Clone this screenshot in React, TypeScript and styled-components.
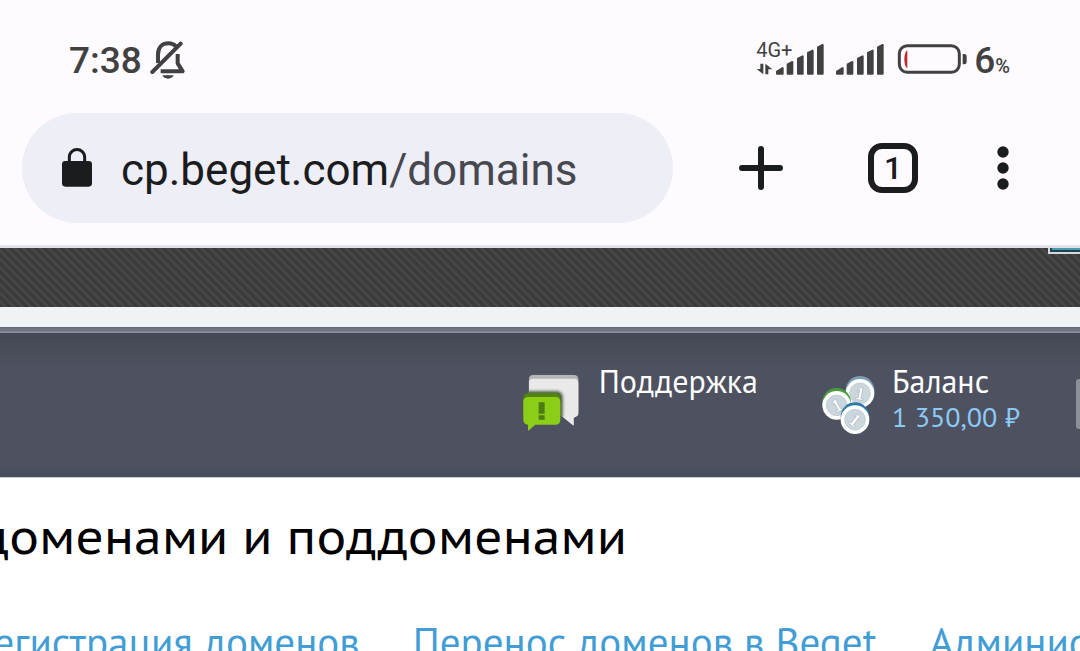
import React from "react";
import styled, { createGlobalStyle } from "styled-components";

const GlobalStyle = createGlobalStyle`
  *, *::before, *::after { box-sizing: border-box; }
  body { margin: 0; background: #fdfbff; }
`;

const siteFont = `"PT Sans", "Noto Sans", sans-serif`;
const captionFont = `"PT Sans Caption", "Noto Sans", sans-serif`;

const Screen = styled.div`
  display: flex;
  flex-direction: column;
  height: 100vh;
  overflow: hidden;
`;

const StatusBar = styled.div`
  display: flex;
  flex: none;
  align-items: center;
  justify-content: space-between;
  height: 113px;
  padding: 8px 70px 2px 69px;
  color: #414141;
  font-family: Roboto, sans-serif;
`;

const StatusGroup = styled.div<{ $gap: number }>`
  display: flex;
  align-items: center;
  gap: ${(p) => p.$gap}px;
`;

const Clock = styled.time`
  padding-top: 2px;
  font-size: 37px;
  font-weight: 500;
  line-height: 44px;
`;

const NetworkType = styled.div`
  display: flex;
  flex-direction: column;
  gap: 5px;
  width: 20px;
  padding-bottom: 3px;
  font-size: 20px;
  line-height: 16px;
  white-space: nowrap;
`;

const Charge = styled.div`
  display: flex;
  align-items: baseline;
  padding-top: 2px;
  font-size: 37px;
  font-weight: 500;
  line-height: 44px;
`;

const Percent = styled.span`
  font-size: 20px;
  line-height: 24px;
`;

const BrowserBar = styled.div`
  display: flex;
  flex: none;
  align-items: center;
  height: 135px;
  padding: 0 33px 22px 22px;
  border-bottom: 3px solid #e3e2e9;
`;

const AddressPill = styled.div`
  display: flex;
  flex: 1;
  align-items: center;
  gap: 29px;
  min-width: 0;
  height: 110px;
  margin-right: 22px;
  padding: 0 40px;
  border-radius: 55px;
  background: #edeef6;
`;

const Address = styled.a`
  padding-top: 4px;
  color: #1b1c20;
  font: 400 44px/56px Roboto, sans-serif;
  text-decoration: none;
  white-space: nowrap;
`;

const AddressPath = styled.span`
  color: #46474f;
`;

const BarButton = styled.button<{ $width: number }>`
  display: flex;
  flex: none;
  align-items: center;
  justify-content: center;
  width: ${(p) => p.$width}px;
  height: 110px;
  padding: 0;
  border: 0;
  background: none;
  color: #1b1c20;
`;

const TabCount = styled.span`
  display: grid;
  place-items: center;
  width: 50px;
  height: 50px;
  border: 6px solid currentColor;
  border-radius: 14px;
  font: 500 32px/38px Roboto, sans-serif;
`;

const Stripes = styled.div`
  display: flex;
  flex: none;
  align-items: flex-start;
  justify-content: flex-end;
  height: 59px;
  background: repeating-linear-gradient(45deg, #3b3b3b 0 2px, #4b4b4b 4px, #3b3b3b 6px);
`;

const BannerEdge = styled.div`
  width: 32px;
  height: 6px;
  border: solid #d5d9d9;
  border-width: 0 0 2px 2px;
  background: #469bb0;
  box-shadow: inset 2px -2px #1d4650;
`;

const LightStrip = styled.div`
  flex: none;
  height: 20px;
  background: #eff3f6;
`;

const Bevel = styled.div`
  flex: none;
  height: 6px;
  background: linear-gradient(#666976 0 1px, #777a88 2px, #696c7a 3px, #777a8b 4px, #8c8fa0 5px 6px);
`;

const SiteHeader = styled.header`
  display: flex;
  flex: none;
  align-items: flex-start;
  justify-content: flex-end;
  height: 145px;
  padding-top: 30px;
  border-bottom: 1px solid #c9cbd4;
  background: linear-gradient(#454854, #4e515f 35px, #4e515f 130px, #494c59);
  font-family: ${siteFont};
`;

const HeaderItem = styled.a<{ $gap: number; $end: number; $drop: number }>`
  display: flex;
  align-items: flex-start;
  gap: ${(p) => p.$gap}px;
  margin-right: ${(p) => p.$end}px;
  color: #fff;
  text-decoration: none;
  white-space: nowrap;
  svg { margin-top: ${(p) => p.$drop}px; }
`;

const ItemText = styled.span`
  display: flex;
  flex-direction: column;
  font-size: 32px;
  line-height: 36px;
`;

const Amount = styled.span`
  color: #8ccaf6;
  font-size: 28px;
`;

const NextItem = styled.span`
  width: 4px;
  height: 50px;
  margin-top: 16px;
  border-radius: 3px 0 0 3px;
  background: #8c8e98;
`;

const Content = styled.main`
  flex: 1;
  min-height: 0;
  overflow: hidden;
  background: #fff;
`;

const Title = styled.h1`
  margin: 22px 0 0 -21px;
  color: #000;
  font-family: ${captionFont};
  font-size: 48px;
  font-weight: 400;
  line-height: 72px;
  white-space: nowrap;
`;

const Links = styled.nav`
  display: flex;
  gap: 53px;
  margin: 44px 0 0 -28px;
  white-space: nowrap;
`;

const SiteLink = styled.a`
  color: #429dd4;
  font-family: ${siteFont};
  font-size: 41px;
  line-height: 52px;
  text-decoration: none;
`;

const MutedBell = () => (
  <svg width="36" height="38" viewBox="298 61 108 114" fill="none" stroke="currentColor" strokeWidth="12" strokeLinecap="round">
    <path d="M305 154 390 69" />
    <path d="M322 127V102C322 78 337 68 353 68C363 68 370 71 376 77" strokeLinecap="butt" />
    <path d="M381 100V128L396 152H330" strokeLinecap="butt" strokeLinejoin="round" />
    <path d="M335 164H369Q364 174 352 174Q340 174 335 164Z" fill="currentColor" stroke="none" />
  </svg>
);

const DataArrows = () => (
  <svg width="17" height="12" viewBox="0 0 51 36" fill="currentColor">
    <path d="M13 2H22V34L2 18H13ZM28 2 49 19H37V34H28Z" />
  </svg>
);

const Signal = () => (
  <svg width="48" height="31" viewBox="0 0 144 93" fill="currentColor" stroke="currentColor" strokeWidth="6" strokeLinejoin="round">
    <path d="M3 83 20 72V89H3ZM35 61 49 54V89H35ZM66 44 80 37V89H66ZM96 27 110 20V89H96ZM126 10 140 3V89H126Z" />
  </svg>
);

const Battery = () => (
  <svg width="70" height="32" viewBox="0 0 210 96" fill="none">
    <rect x="7" y="5" width="180" height="80" rx="24" stroke="#414141" strokeWidth="9" />
    <path d="M197 30H202Q209 30 209 38V54Q209 61 202 61H197Z" fill="#414141" />
    <path d="M31 19V73Q22 67 22 46Q22 25 31 19Z" fill="#c02a2f" />
  </svg>
);

const Lock = () => (
  <svg width="30" height="40" viewBox="0 0 90 120" fill="none">
    <path d="M22 44V28C22 -3 68 -3 68 28V44" stroke="#1b1c20" strokeWidth="9" />
    <rect y="39" width="90" height="77" rx="10" fill="#1b1c20" />
  </svg>
);

const Plus = () => (
  <svg width="44" height="44" viewBox="0 0 44 44" stroke="currentColor" strokeWidth="6" strokeLinecap="round">
    <path d="M22 3V41M3 22H41" />
  </svg>
);

const Dots = () => (
  <svg width="12" height="44" viewBox="0 0 12 44" fill="currentColor">
    <circle cx="6" cy="6" r="5.7" />
    <circle cx="6" cy="22" r="5.7" />
    <circle cx="6" cy="38" r="5.7" />
  </svg>
);

const SupportIcon = () => (
  <svg width="56" height="58" viewBox="64 70 168 174">
    <defs>
      <filter id="bubbleShade" x="-30%" y="-30%" width="160%" height="160%">
        <feGaussianBlur stdDeviation="5" />
      </filter>
      <clipPath id="backBubble">
        <path d="M95 72H216Q231 72 231 90V186Q231 196 216 201V225L180 196H81V90Q81 72 95 72Z" />
      </clipPath>
    </defs>
    <g clipPath="url(#backBubble)">
      <rect x="64" y="70" width="168" height="174" fill="#b5b5b5" />
      <path d="M95 84H216Q231 84 231 100V244H81V100Q81 84 95 84Z" fill="#e9e9e9" />
      <rect x="64" y="122" width="119" height="88" rx="16" fill="#48543c" filter="url(#bubbleShade)" />
    </g>
    <rect x="65" y="128" width="111" height="80" rx="15" fill="#50860f" />
    <path d="M80 139H161Q176 139 176 154V207Q176 222 161 222H101L79 241V222Q65 220 65 207V154Q65 139 80 139Z" fill="#8ccd17" />
    <path d="M111 155H129V189H111ZM111 194H129V207H111Z" fill="#4d7b13" />
  </svg>
);

const Coin = ({ x, y, edge, turn }: { x: number; y: number; edge: string; turn: number }) => (
  <g transform={`translate(${x} ${y})`}>
    <circle cy="-9" r="43" fill={edge} />
    <circle r="43" fill="#fcfdfd" />
    <circle r="31" fill="#cbd6dd" stroke="#b4c3cc" strokeWidth="2" />
    <g transform={`rotate(${turn})`}>
      <path d="M-9 -11 2 -19H6V15H12V20H-10V15H-3V-10L-9 -7Z" fill="#fff" stroke="#a9b8c1" strokeWidth="2" />
    </g>
  </g>
);

const CoinsIcon = () => (
  <svg width="53" height="59" viewBox="65 76 159 177">
    <Coin x={179} y={128} edge="#7d9db2" turn={12} />
    <Coin x={109} y={164} edge="#4c9a40" turn={-28} />
    <Coin x={164} y={207} edge="#2e7ba4" turn={38} />
  </svg>
);

export default function App() {
  return (
    <Screen>
      <GlobalStyle />
      <StatusBar>
        <StatusGroup $gap={8}>
          <Clock>7:38</Clock>
          <MutedBell />
        </StatusGroup>
        <StatusGroup $gap={13}>
          <StatusGroup $gap={12}>
            <StatusGroup $gap={0}>
              <NetworkType>
                4G+
                <DataArrows />
              </NetworkType>
              <Signal />
            </StatusGroup>
            <Signal />
          </StatusGroup>
          <StatusGroup $gap={7}>
            <Battery />
            <Charge>
              6<Percent>%</Percent>
            </Charge>
          </StatusGroup>
        </StatusGroup>
      </StatusBar>
      <BrowserBar>
        <AddressPill>
          <Lock />
          <Address href="#domains">
            cp.beget.com<AddressPath>/domains</AddressPath>
          </Address>
        </AddressPill>
        <BarButton $width={132} aria-label="Новая вкладка">
          <Plus />
        </BarButton>
        <BarButton $width={132}>
          <TabCount>1</TabCount>
        </BarButton>
        <BarButton $width={88} aria-label="Меню">
          <Dots />
        </BarButton>
      </BrowserBar>
      <Stripes>
        <BannerEdge />
      </Stripes>
      <LightStrip />
      <Bevel />
      <SiteHeader>
        <HeaderItem href="#support" $gap={20} $end={64} $drop={11}>
          <SupportIcon />
          <ItemText>Поддержка</ItemText>
        </HeaderItem>
        <HeaderItem href="#balance" $gap={17} $end={56} $drop={13}>
          <CoinsIcon />
          <ItemText>
            Баланс
            <Amount>1 350,00 ₽</Amount>
          </ItemText>
        </HeaderItem>
        <NextItem />
      </SiteHeader>
      <Content>
        <Title>доменами и поддоменами</Title>
        <Links>
          <SiteLink href="#register">Регистрация доменов</SiteLink>
          <SiteLink href="#transfer">Перенос доменов в Beget</SiteLink>
          <SiteLink href="#admin">Администрирование</SiteLink>
        </Links>
      </Content>
    </Screen>
  );
}
